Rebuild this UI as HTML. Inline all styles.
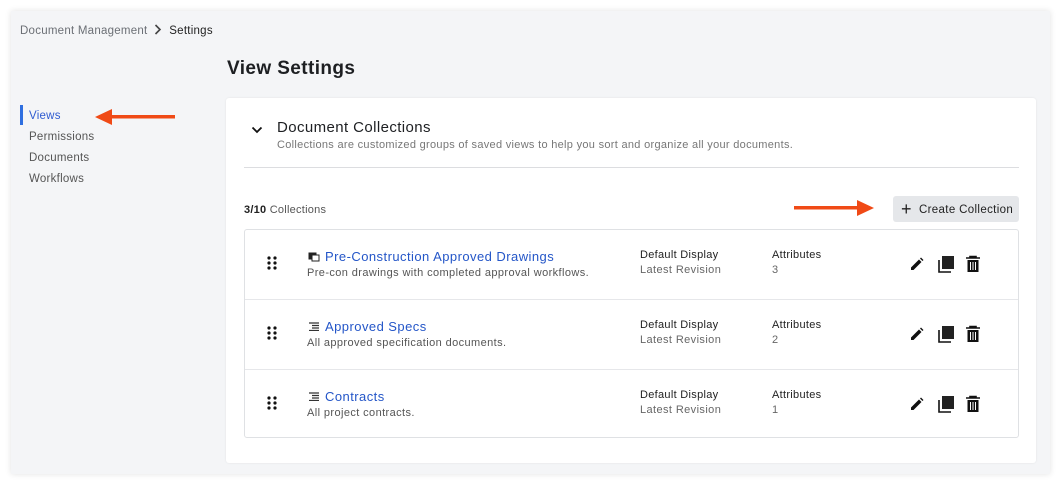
<!DOCTYPE html>
<html><head><meta charset="utf-8"><style>
*{box-sizing:border-box;margin:0;padding:0}
body{width:1061px;height:485px;background:#fff;font-family:"Liberation Sans",sans-serif;position:relative;overflow:hidden;color:#222;letter-spacing:0.25px}
.frame{position:absolute;left:11px;top:11px;width:1039px;height:463px;background:#f4f5f7;box-shadow:0 0 6px rgba(0,0,0,.12)}
.a{position:absolute}
.crumb{left:20px;top:22px;font-size:11.5px;color:#6b6f75}
.crumb b{font-weight:normal;color:#222}
h1{position:absolute;left:227px;top:58px;font-size:19px;font-weight:bold;color:#1d1f22;letter-spacing:0.4px}
.nav{left:29px;font-size:11.5px;color:#555}
.card{left:226px;top:98px;width:810px;height:365px;background:#fff;border-radius:3px;box-shadow:0 0 2px rgba(0,0,0,.08)}
.list{left:244px;top:229px;width:775px;height:209px;border:1px solid #dfe1e4;border-radius:3px;background:#fff}
.row{position:absolute;left:0;width:773px;height:70px;border-bottom:1px solid #e6e7ea}
.t{color:#2456c8;font-size:13px;letter-spacing:0.45px}
.s{color:#555;font-size:11px;letter-spacing:0.4px}
.lbl{font-size:11px;color:#222;letter-spacing:0.3px}
</style></head><body>
<div class="frame"></div>
<div class="a crumb" style="top:24px">Document Management &nbsp;<svg width="8" height="11" style="vertical-align:-1px"><path d="M1.5 1 L6 5.5 L1.5 10" stroke="#444" stroke-width="1.6" fill="none"/></svg>&nbsp; <b>Settings</b></div>
<h1>View Settings</h1>
<div class="a" style="left:20px;top:105px;width:3px;height:20px;background:#2f6fe0"></div>
<div class="a nav" style="top:110px;color:#2f5bd0">Views</div>
<div class="a nav" style="top:131px">Permissions</div>
<div class="a nav" style="top:152px">Documents</div>
<div class="a nav" style="top:173px">Workflows</div>
<svg class="a" style="left:94px;top:108px" width="82" height="18"><rect x="14" y="7" width="67" height="3.5" fill="#f04a16"/><polygon points="1,9 18,1 18,17" fill="#f04a16"/></svg>
<div class="a card"></div>
<svg class="a" style="left:251px;top:125px" width="12" height="10"><path d="M1.5 2.5 L6 7 L10.5 2.5" stroke="#111" stroke-width="1.8" fill="none"/></svg>
<div class="a" style="left:277px;top:119px;font-size:15px;color:#1d1f22;letter-spacing:0.4px">Document Collections</div>
<div class="a s" style="left:277px;top:139px;color:#777;letter-spacing:0.3px">Collections are customized groups of saved views to help you sort and organize all your documents.</div>
<div class="a" style="left:244px;top:167px;width:775px;height:1px;background:#dcdde0"></div>
<div class="a" style="left:244px;top:204px;font-size:11px;color:#555"><b style="color:#222">3/10</b> Collections</div>
<svg class="a" style="left:793px;top:199px" width="82" height="18"><rect x="1" y="7" width="65" height="3.5" fill="#f04a16"/><polygon points="81,9 64,1 64,17" fill="#f04a16"/></svg>
<div class="a" style="left:893px;top:196px;width:126px;height:26px;background:#e5e7ea;border-radius:3px;font-size:11.5px;color:#222;line-height:26px;padding-left:8px;letter-spacing:0.35px"><span style="font-size:18px;vertical-align:-2px">+</span>&nbsp;&nbsp;Create Collection</div>
<div class="a list">
<div class="row" style="top:0"></div><div class="row" style="top:70px"></div><div class="row" style="top:140px;border:none"></div>
</div>

<div class="a" style="left:266px;top:255px;font-size:0"><svg width="12" height="16"><g fill="#111"><circle cx="3" cy="3" r="1.6"/><circle cx="9" cy="3" r="1.6"/><circle cx="3" cy="8" r="1.6"/><circle cx="9" cy="8" r="1.6"/><circle cx="3" cy="13" r="1.6"/><circle cx="9" cy="13" r="1.6"/></g></svg></div>
<svg class="a" style="left:308px;top:252px" width="12" height="10"><rect x="0.5" y="0.5" width="8" height="7" fill="#222"/><rect x="4" y="3" width="7" height="6" fill="#fff" stroke="#222"/></svg>
<div class="a t" style="left:325px;top:249px">Pre-Construction Approved Drawings</div>
<div class="a s" style="left:307px;top:267px">Pre-con drawings with completed approval workflows.</div>
<div class="a lbl" style="left:640px;top:249px">Default Display</div><div class="a s" style="left:640px;top:264px;color:#666">Latest Revision</div>
<div class="a lbl" style="left:772px;top:249px">Attributes</div><div class="a s" style="left:772px;top:264px;color:#666">3</div>

<div class="a" style="left:266px;top:325px;font-size:0"><svg width="12" height="16"><g fill="#111"><circle cx="3" cy="3" r="1.6"/><circle cx="9" cy="3" r="1.6"/><circle cx="3" cy="8" r="1.6"/><circle cx="9" cy="8" r="1.6"/><circle cx="3" cy="13" r="1.6"/><circle cx="9" cy="13" r="1.6"/></g></svg></div>
<svg class="a" style="left:309px;top:322px" width="10" height="9"><path d="M0 1h10M3 3.5h7M3 6h7M0 8.5h10" stroke="#333" stroke-width="1.2"/></svg>
<div class="a t" style="left:325px;top:319px">Approved Specs</div>
<div class="a s" style="left:307px;top:337px">All approved specification documents.</div>
<div class="a lbl" style="left:640px;top:319px">Default Display</div><div class="a s" style="left:640px;top:334px;color:#666">Latest Revision</div>
<div class="a lbl" style="left:772px;top:319px">Attributes</div><div class="a s" style="left:772px;top:334px;color:#666">2</div>

<div class="a" style="left:266px;top:395px;font-size:0"><svg width="12" height="16"><g fill="#111"><circle cx="3" cy="3" r="1.6"/><circle cx="9" cy="3" r="1.6"/><circle cx="3" cy="8" r="1.6"/><circle cx="9" cy="8" r="1.6"/><circle cx="3" cy="13" r="1.6"/><circle cx="9" cy="13" r="1.6"/></g></svg></div>
<svg class="a" style="left:309px;top:392px" width="10" height="9"><path d="M0 1h10M3 3.5h7M3 6h7M0 8.5h10" stroke="#333" stroke-width="1.2"/></svg>
<div class="a t" style="left:325px;top:389px">Contracts</div>
<div class="a s" style="left:307px;top:407px">All project contracts.</div>
<div class="a lbl" style="left:640px;top:389px">Default Display</div><div class="a s" style="left:640px;top:404px;color:#666">Latest Revision</div>
<div class="a lbl" style="left:772px;top:389px">Attributes</div><div class="a s" style="left:772px;top:404px;color:#666">1</div>

<svg class="a" style="left:908px;top:255px" width="80" height="160">
<defs><g id="ic">
<path d="M3 15 L3 12.5 L11 4.5 L13.5 7 L5.5 15 Z M12 3.5 L13 2.5 L15.5 5 L14.5 6 Z" fill="#111"/>
<path d="M31 5 V17 H43" stroke="#111" stroke-width="1.6" fill="none"/><rect x="34" y="1" width="12" height="13" fill="#222"/>
<path d="M58 3 H72 M62 3 V1.5 H68 V3" stroke="#111" stroke-width="1.6" fill="none"/><path d="M59.5 5 H70.5 V17 H59.5 Z" fill="#111"/><path d="M62.5 7 V15 M65 7 V15 M67.5 7 V15" stroke="#fff" stroke-width="1"/>
</g></defs>
<use href="#ic" y="0"/><use href="#ic" y="70"/><use href="#ic" y="140"/>
</svg>
</body></html>
